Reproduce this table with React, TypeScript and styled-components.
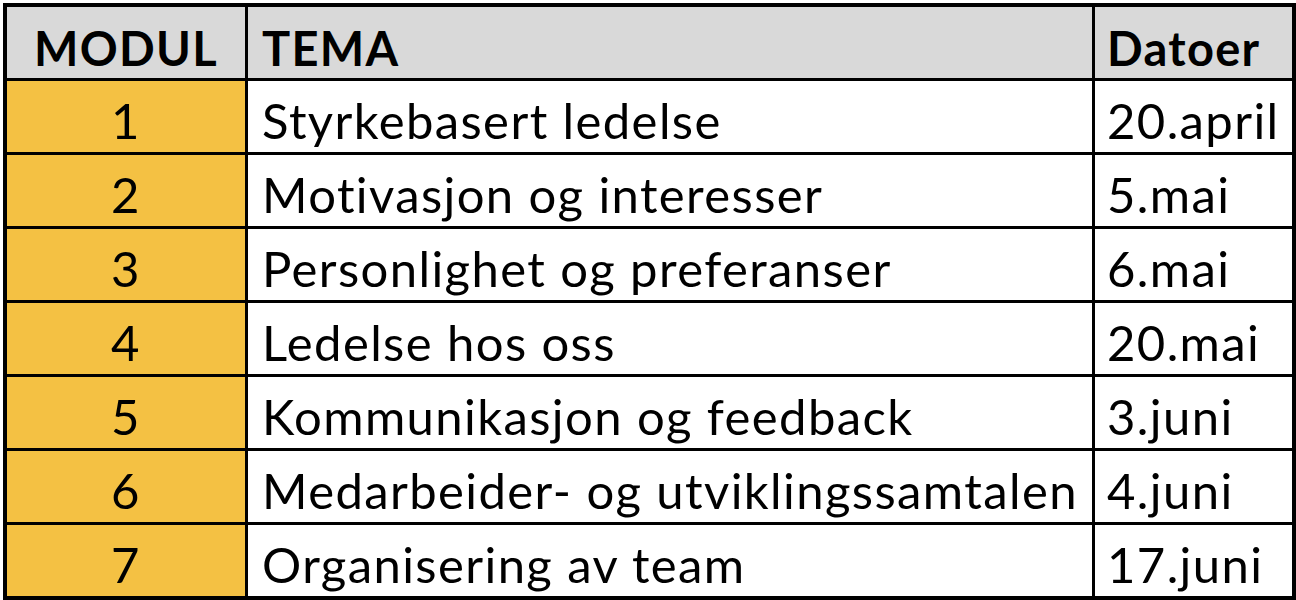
import React from "react";
import styled, { createGlobalStyle } from "styled-components";

const GlobalStyle = createGlobalStyle`
  html, body {
    margin: 0;
    padding: 0;
    background: #ffffff;
  }
  body {
    font-family: Lato, "Liberation Sans", sans-serif;
    color: #000000;
  }
`;

const Page = styled.div`
  padding: 3px 0 0 3px;
`;

const Table = styled.div`
  display: grid;
  grid-template-columns: 238px 844px 197px;
  grid-auto-rows: 71px;
  gap: 3px;
  padding: 4px;
  width: max-content;
  background: #000000;
`;

const Cell = styled.div<{ $align?: "center" | "left"; $pad?: number }>`
  display: flex;
  align-items: flex-end;
  justify-content: ${(p) => (p.$align === "center" ? "center" : "flex-start")};
  padding: 0 0 7px ${(p) => p.$pad ?? 0}px;
  font-size: 49px;
  letter-spacing: 1.4px;
  line-height: 1;
  white-space: nowrap;
  overflow: hidden;
`;

const HeaderCell = styled(Cell)`
  background: #d9d9d9;
  font-weight: 700;
  font-size: 47px;
  letter-spacing: 1.3px;
  padding-bottom: 6px;
`;

const ModuleCell = styled(Cell)`
  background: #f4c143;
`;

const BodyCell = styled(Cell)`
  background: #ffffff;
`;

const rows = [
  { n: "1", topic: "Styrkebasert ledelse", date: "20.april" },
  { n: "2", topic: "Motivasjon og interesser", date: "5.mai" },
  { n: "3", topic: "Personlighet og preferanser", date: "6.mai" },
  { n: "4", topic: "Ledelse hos oss", date: "20.mai" },
  { n: "5", topic: "Kommunikasjon og feedback", date: "3.juni" },
  { n: "6", topic: "Medarbeider- og utviklingssamtalen", date: "4.juni" },
  { n: "7", topic: "Organisering av team", date: "17.juni" },
];

export default function App() {
  return (
    <>
      <GlobalStyle />
      <Page>
        <Table>
          <HeaderCell $align="center">MODUL</HeaderCell>
          <HeaderCell $pad={14}>TEMA</HeaderCell>
          <HeaderCell $pad={12}>Datoer</HeaderCell>
          {rows.map((r) => (
            <React.Fragment key={r.n}>
              <ModuleCell $align="center">{r.n}</ModuleCell>
              <BodyCell $pad={14}>{r.topic}</BodyCell>
              <BodyCell $pad={12}>{r.date}</BodyCell>
            </React.Fragment>
          ))}
        </Table>
      </Page>
    </>
  );
}
